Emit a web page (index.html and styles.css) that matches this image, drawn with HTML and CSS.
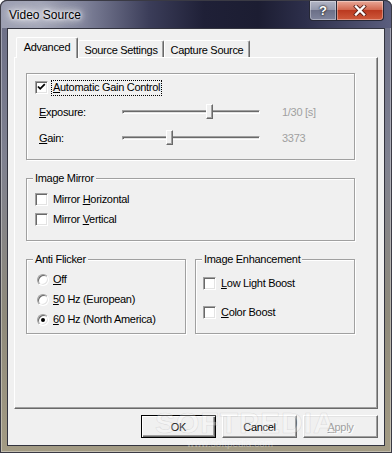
FILE: index.html
```html
<!DOCTYPE html>
<html>
<head>
<meta charset="utf-8">
<title>Video Source</title>
<link rel="stylesheet" href="styles.css">
</head>
<body>
<div class="window">
  <div class="titlebar">
    <span class="title">Video Source</span>
    <div class="cbtns">
      <div class="cbtn help">?</div>
      <div class="cbtn close">
        <svg width="14" height="11" viewBox="0 0 14 11"><path d="M3 1.5 L11 9.5 M11 1.5 L3 9.5" stroke="#5a2018" stroke-width="4" stroke-linecap="square"/><path d="M3 1.5 L11 9.5 M11 1.5 L3 9.5" stroke="#fff" stroke-width="2.4" stroke-linecap="square"/></svg>
      </div>
    </div>
  </div>
  <div class="client">
    <div class="tabs">
      <div class="tab sel">Advanced</div>
      <div class="tab">Source Settings</div>
      <div class="tab">Capture Source</div>
    </div>
    <div class="panel">
      <div class="group g1">
        <div class="row ind8">
          <span class="cb"><svg width="11" height="11" viewBox="0 0 11 11"><path d="M2 4.5 L4.2 6.8 L8.8 2.2" fill="none" stroke="#000" stroke-width="1.8"/></svg></span>
          <span class="focus"><u>A</u>utomatic Gain Control</span>
        </div>
        <div class="srow">
          <span class="slabel"><u>E</u>xposure:</span>
          <div class="slider"><div class="track"></div><div class="thumb" style="left:84px"></div></div>
          <span class="sval">1/30 [s]</span>
        </div>
        <div class="srow">
          <span class="slabel"><u>G</u>ain:</span>
          <div class="slider"><div class="track"></div><div class="thumb" style="left:44px"></div></div>
          <span class="sval">3373</span>
        </div>
      </div>

      <div class="group g2">
        <div class="gtitle">Image Mirror</div>
        <div class="row ind8 r1"><span class="cb"></span><span>Mirror <u>H</u>orizontal</span></div>
        <div class="row ind8 r2"><span class="cb"></span><span>Mirror <u>V</u>ertical</span></div>
      </div>

      <div class="grow">
        <div class="group g3">
          <div class="gtitle">Anti Flicker</div>
          <div class="row ind10 rr"><span class="rb"></span><span><u>O</u>ff</span></div>
          <div class="row ind10 rr"><span class="rb"></span><span><u>5</u>0 Hz (European)</span></div>
          <div class="row ind10 rr"><span class="rb on"></span><span><u>6</u>0 Hz (North America)</span></div>
        </div>
        <div class="group g4">
          <div class="gtitle">Image Enhancement</div>
          <div class="row ind7 e1"><span class="cb"></span><span><u>L</u>ow Light Boost</span></div>
          <div class="row ind7 e2"><span class="cb"></span><span><u>C</u>olor Boost</span></div>
        </div>
      </div>
    </div>
    <div class="buttons">
      <div class="btn def">OK</div>
      <div class="btn">Cancel</div>
      <div class="btn dis"><u>A</u>pply</div>
    </div>
  </div>
  <div class="wm">
    <div class="wm-big">SOFTPEDIA<span class="tm">™</span></div>
    <div class="wm-small">www.softpedia.com</div>
  </div>
</div>
</body>
</html>
```
FILE: styles.css
```css
* { box-sizing: border-box; }
html, body { margin: 0; padding: 0; }
body {
  width: 392px;
  height: 453px;
  overflow: hidden;
  background: #fff;
  font-family: "Liberation Sans", Arial, sans-serif;
  font-size: 11px;
  letter-spacing: -0.3px;
  color: #000;
}
u { text-decoration: underline; text-underline-offset: 1px; }

.window {
  position: relative;
  width: 392px;
  height: 453px;
  display: flex;
  flex-direction: column;
  padding: 0 7px 7px;
  border-radius: 7px 7px 0 0;
  background: linear-gradient(to bottom, #6a6d86 0%, #7f8190 35%, #8f8a7b 70%, #a39b84 100%);
  box-shadow: inset 0 0 0 1px #3a3a44, inset 0 0 0 2px rgba(255,255,255,0.35);
}

.titlebar {
  height: 28px;
  flex: none;
  margin: 0 -7px;
  padding: 0 8px 0 8px;
  display: flex;
  justify-content: space-between;
  align-items: flex-start;
  border-radius: 7px 7px 0 0;
  border: 1px solid #3a3a44;
  border-bottom: none;
  background: linear-gradient(to right, #9c9fb2 0%, #a2a5b7 10%, #7c7f97 22%, #3b3d59 38%, #1f2037 52%, #1c1d32 66%, #2d2f4b 78%, #5b5e7e 100%);
}
.title {
  margin-top: 7px;
  font-size: 12px;
  letter-spacing: 0;
  line-height: 14px;
  color: #000;
  text-shadow: 0 0 3px #fff, 0 0 6px #fff, 0 0 10px #fff, 0 0 14px #fff;
}
.cbtns { display: flex; margin-right: -1px; }
.cbtn {
  height: 20px;
  display: flex;
  align-items: center;
  justify-content: center;
  border: 1px solid #262836;
  border-top: none;
  box-shadow: inset 0 0 0 1px rgba(255,255,255,0.35);
}
.help {
  width: 28px;
  border-radius: 0 0 0 4px;
  color: #fff;
  font-weight: bold;
  font-size: 13px;
  letter-spacing: 0;
  text-shadow: 0 0 2px #222, 0 0 2px #222;
  background: linear-gradient(to bottom, #b3b6c6 0%, #959aae 45%, #6c7088 50%, #7f849c 100%);
}
.close {
  width: 47px;
  border-left: none;
  border-radius: 0 0 4px 0;
  background: linear-gradient(to bottom, #e9a898 0%, #d26a52 45%, #bb3a20 50%, #cf5a3c 100%);
}

.client {
  flex: 1;
  display: flex;
  flex-direction: column;
  border: 1px solid #33343f;
  background: #f0f0f0;
  padding: 8px 6px 7px;
}

.tabs {
  display: flex;
  align-items: flex-end;
  height: 20px;
  padding-left: 2px;
  position: relative;
  z-index: 1;
}
.tab {
  width: 86px;
  height: 17px;
  display: flex;
  align-items: center;
  justify-content: center;
  border: 1px solid;
  border-color: #fff #696969 transparent #fff;
  border-bottom: none;
  border-radius: 2px 2px 0 0;
  box-shadow: inset -1px 0 #a0a0a0;
  padding-top: 1px;
}
.tab.sel {
  width: 62px;
  height: 21px;
  margin-bottom: -1px;
  background: #f0f0f0;
  padding-top: 0;
  padding-bottom: 2px;
}

.panel {
  height: 352px;
  flex: none;
  border: 1px solid;
  border-color: #fff #696969 #696969 #fff;
  box-shadow: inset -1px -1px #a0a0a0;
  padding: 15px 0 0 11px;
}

.group {
  border: 1px solid #a0a0a0;
  box-shadow: inset 1px 1px #fff, 1px 1px #fff;
}
.gtitle {
  width: fit-content;
  margin: -7px 0 0 6px;
  padding: 0 2px;
  line-height: 13px;
  background: #f0f0f0;
}
.g1 { width: 329px; height: 87px; padding-top: 7px; }
.g2 { width: 329px; height: 63px; margin-top: 18px; }
.grow { display: flex; gap: 9px; margin-top: 18px; }
.g3, .g4 { width: 160px; height: 75px; }

.row { display: flex; align-items: center; height: 13px; line-height: 13px; }
.ind8 { margin-left: 8px; }
.ind10 { margin-left: 10px; }
.ind7 { margin-left: 7px; }
.r1 { margin-top: 8px; }
.r2 { margin-top: 7px; }
.rr { margin-top: 7px; }
.e1 { margin-top: 11px; }
.e2 { margin-top: 16px; }

.cb {
  flex: none;
  width: 13px;
  height: 13px;
  margin-right: 5px;
  border: 1px solid;
  border-color: #a0a0a0 #fff #fff #a0a0a0;
  box-shadow: inset 1px 1px #696969, inset -1px -1px #e3e3e3;
  background: #fff;
}
.cb svg { display: block; }
.focus {
  outline: 1px dotted #000;
  margin-left: -1px;
  padding: 0 1px 1px;
  line-height: 13px;
}
.g4 .cb { margin-right: 5px; }

.rb {
  flex: none;
  width: 12px;
  height: 12px;
  margin-right: 4px;
  border-radius: 50%;
  border: 1px solid;
  border-color: #a0a0a0 #fff #fff #a0a0a0;
  box-shadow: inset 1px 1px #696969, inset -1px -1px #e3e3e3;
  background: #fff;
  display: flex;
  align-items: center;
  justify-content: center;
}
.rb.on::after {
  content: "";
  width: 4px;
  height: 4px;
  border-radius: 50%;
  background: #000;
}

.srow {
  display: flex;
  align-items: center;
  height: 16px;
  margin: 10px 0 0 12px;
}
.slabel { width: 83px; }
.slider {
  position: relative;
  width: 138px;
  height: 16px;
  display: flex;
  align-items: center;
}
.track {
  width: 100%;
  height: 4px;
  border: 1px solid;
  border-color: #a0a0a0 #fff #fff #a0a0a0;
  box-shadow: inset 1px 1px #696969;
  background: #e3e3e3;
}
.thumb {
  position: absolute;
  top: 0;
  width: 7px;
  height: 15px;
  background: #f0f0f0;
  border: 1px solid;
  border-color: #fff #696969 #696969 #fff;
  box-shadow: inset -1px -1px #a0a0a0;
}
.sval { margin-left: 22px; color: #a0a0a0; }

.buttons {
  display: flex;
  justify-content: flex-end;
  gap: 6px;
  margin-top: 6px;
}
.btn {
  width: 75px;
  height: 23px;
  display: flex;
  align-items: center;
  justify-content: center;
  background: #f0f0f0;
  border: 1px solid;
  border-color: #fff #696969 #696969 #fff;
  box-shadow: inset -1px -1px #a0a0a0, inset 1px 1px #e3e3e3;
}
.btn.def {
  border-color: #000;
  box-shadow: inset 1px 1px #fff, inset -1px -1px #696969, inset -2px -2px #a0a0a0;
}
.btn.dis { color: #a0a0a0; text-shadow: 1px 1px #fff; }

.wm {
  position: absolute;
  left: 155px;
  top: 407px;
  width: 150px;
  text-align: center;
  pointer-events: none;
}
.wm-big {
  font-size: 30px;
  font-weight: bold;
  letter-spacing: 1px;
  line-height: 32px;
  color: rgba(255,255,255,0.3);
  -webkit-text-stroke: 0.6px rgba(150,150,150,0.25);
}
.tm { font-size: 8px; vertical-align: top; -webkit-text-stroke: 0; }
.wm-small {
  font-size: 10px;
  letter-spacing: 0;
  line-height: 10px;
  color: rgba(255,255,255,0.35);
}
```
